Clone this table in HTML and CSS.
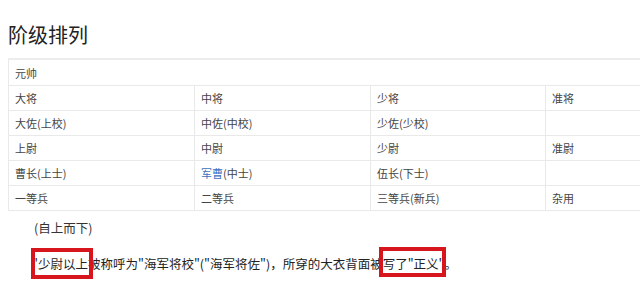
FILE: index.html
```html
<!DOCTYPE html>
<html lang="zh-CN">
<head>
    <meta charset="UTF-8">
    <meta name="viewport" content="width=device-width, initial-scale=1.0">
    <title>阶级排列</title>
    <link rel="stylesheet" href="styles.css">
</head>
<body>
    <h1>阶级排列</h1>

    <!-- 军衔表 -->
    <table class="ranks">
        <colgroup>
            <col class="c1"><col class="c2"><col class="c3"><col class="c4">
        </colgroup>
        <tr><td colspan="4">元帅</td></tr>
        <tr><td>大将</td><td>中将</td><td>少将</td><td>准将</td></tr>
        <tr><td>大佐(上校)</td><td>中佐(中校)</td><td>少佐(少校)</td><td></td></tr>
        <tr><td>上尉</td><td>中尉</td><td>少尉</td><td>准尉</td></tr>
        <tr><td>曹长(上士)</td><td><a href="#">军曹</a>(中士)</td><td>伍长(下士)</td><td></td></tr>
        <tr><td>一等兵</td><td>二等兵</td><td>三等兵(新兵)</td><td>杂用</td></tr>
    </table>

    <p class="caption">(自上而下)</p>
    <p class="text"><span class="mark mark-a">"少尉以上</span>被称呼为"海军将校"("海军将佐")，所穿的大衣背面被<span class="mark mark-b">写了"正义</span>"。</p>
</body>
</html>
```

FILE: styles.css
```css
html, body {
    min-height: 306px;
}
body {
    margin: 0;
    padding: 0 0 0 8px;
    font-family: "Microsoft YaHei", "Noto Sans CJK SC", "Noto Sans", sans-serif;
    color: #333;
    background: #fff;
}
h1 {
    margin: 21px 0 9px;
    font-size: 20px;
    line-height: 28px;
    font-weight: normal;
    color: #222;
}
.ranks {
    width: 632px;
    table-layout: fixed;
    border-collapse: collapse;
    border-top: 2px solid #ececec;
    font-size: 11px;
}
.c1 { width: 186px; }
.c2 { width: 176px; }
.c3 { width: 175px; }
.ranks td {
    height: 24px;
    padding: 0 6px;
    border: 1px solid #e9e9e9;
    color: #444;
    white-space: nowrap;
}
.ranks td:last-child {
    border-right: none;
}
.ranks tr:first-child td {
    height: 25px;
}
.ranks a {
    color: #3a6fbf;
    text-decoration: none;
}
.caption {
    margin: 8px 0 0 26px;
    font-size: 12.5px;
    line-height: 18px;
    color: #333;
}
.text {
    margin: 18px 0 0 24px;
    font-size: 12.5px;
    line-height: 18px;
    color: #222;
    white-space: nowrap;
}
/* 红框标注 */
.mark {
    display: inline-block;
    position: relative;
    line-height: 18px;
}
.mark::after {
    content: "";
    position: absolute;
    box-sizing: border-box;
    border: 4px solid #d7151c;
}
.mark-a::after {
    left: -1px;
    width: 62px;
    top: -7px;
    height: 31px;
}
.mark-b::after {
    left: -4px;
    width: 67px;
    top: -8px;
    height: 30px;
}
```
